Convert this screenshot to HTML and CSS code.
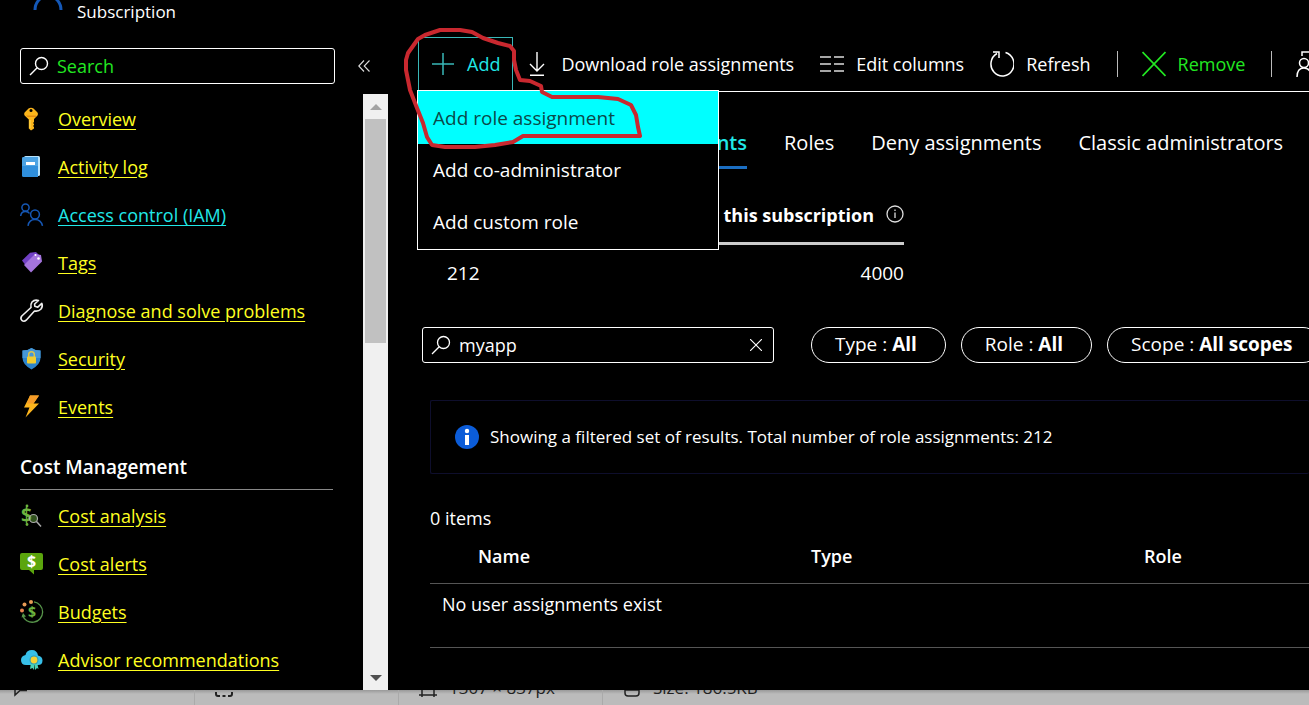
FILE: index.html
```
<!DOCTYPE html>
<html lang="en">
<head>
  <meta charset="UTF-8" />
  <title>Subscription - Access control (IAM)</title>
  <meta name="viewport" content="width=device-width, initial-scale=1" />
  <link rel="stylesheet" href="styles.css">
</head>
<body>

  <div class="portal">

    <!-- Sidebar -->
    <aside class="sidebar">
      <div class="resource-header">
        <svg class="resource-icon" width="30" height="12" viewBox="0 0 30 12" fill="none" stroke="#1458b8" stroke-width="3"><path d="M2 10A13 14 0 0 1 28 10"/></svg>
        <span>Subscription</span>
      </div>

      <div class="side-search-row">
        <div class="search-box">
          <svg width="20" height="20" viewBox="0 0 20 20" fill="none" stroke="#fff" stroke-width="1.4"><circle cx="12.5" cy="7.5" r="6"/><path d="M8.2 11.8L1 19"/></svg>
          <input type="text" class="side-input" placeholder="Search" aria-label="Search menu" />
        </div>
        <button class="collapse-btn" aria-label="Collapse menu">
          <svg width="12" height="12" viewBox="0 0 12 12" fill="none" stroke="#ddd" stroke-width="1.1"><path d="M6 .5L.8 6L6 11.500M11.500 .5L6.200 6L11.500 11.500"/></svg>
        </button>
      </div>

      <div class="side-body">
        <nav class="side-nav">
          <a href="#overview">
            <svg width="24" height="24" viewBox="0 0 24 24"><path d="M8.500 1.500Q11 0 13.500 1.500L17.500 5.500Q18.500 7 17.500 8.500L14 12V15L13 16L14 17V18L13 19L14 20V21.500L11 23.500L8.800 21.500V12.500L4.600 8.500Q3.600 7 4.600 5.500Z" fill="#fbb51b"/><path d="M6 8.500H16V10H7.500Z" fill="#e38b10"/><circle cx="11" cy="3.500" r="1.500" fill="#000"/><path d="M10 13V21" stroke="#ffdc55"/></svg>
            <span>Overview</span>
          </a>
          <a href="#activity">
            <svg width="24" height="24" viewBox="0 0 24 24"><rect x="4" y="1" width="16" height="20" rx="1.500" fill="#b9e3fb"/><path d="M2 3.500Q2 2 3.500 2H18V22H3.500Q2 22 2 20.500Z" fill="#2f8fdc"/><path d="M2 3.500Q2 2 3.500 2H18V11H2Z" fill="#4ba3e4"/><rect x="6" y="7" width="9" height="3" fill="#fff"/></svg>
            <span>Activity log</span>
          </a>
          <a href="#iam" class="active">
            <svg width="24" height="24" viewBox="0 0 24 24" fill="none" stroke="#1557b5" stroke-width="1.5"><circle cx="5.500" cy="4.500" r="3.600"/><path d="M.7 13Q1 8.500 5.500 8.500Q8.500 8.500 9.500 10.500"/><circle cx="15" cy="11.500" r="4.400"/><path d="M8 22.800Q9 16.500 15 16.500T22.500 22.800"/></svg>
            <span>Access control (IAM)</span>
          </a>
          <a href="#tags">
            <svg width="24" height="24" viewBox="0 0 24 24"><path d="M2 9.500L10 1.800L16 1L19 4L7 16Z" fill="#7140c4"/><path d="M4 14L15 3L21 4L22 10.500L11 21.500Z" fill="#a474dd"/><circle cx="15.500" cy="4" r="1" fill="#fff"/><circle cx="18.500" cy="7.500" r="1.300" fill="#fff"/></svg>
            <span>Tags</span>
          </a>
          <a href="#diagnose">
            <svg width="24" height="24" viewBox="0 0 24 24" fill="none" stroke="#eee" stroke-width="1.600" stroke-linejoin="round"><path d="M18.500 1.500Q14.500 .3 12 3Q10.500 5 11 8.500L1.800 17Q0 19.200 1.800 21.300Q4 23.200 6.200 21.200L14.500 12Q18.500 12.700 20.800 10.300Q23.200 7.600 21.800 4.400L17.800 8.200L14.800 7.200L14.600 5Z"/></svg>
            <span>Diagnose and solve problems</span>
          </a>
          <a href="#security">
            <svg width="24" height="24" viewBox="0 0 24 24"><path d="M11.500 1Q15 3.500 20.500 3.500V11Q20.500 17.500 11.500 22.500Q2.500 17.500 2.500 11V3.500Q8 3.500 11.500 1Z" fill="#2c83cb"/><path d="M11.500 1Q15 3.500 20.500 3.500V11H2.500V3.500Q8 3.500 11.500 1Z" fill="#4597d7"/><path d="M8.700 10V7.500A2.800 2.800 0 0 1 14.300 7.500V10" fill="none" stroke="#d9c34c" stroke-width="1.500"/><rect x="7" y="9.500" width="9" height="7" rx="1" fill="#f1ce31"/></svg>
            <span>Security</span>
          </a>
          <a href="#events">
            <svg width="24" height="24" viewBox="0 0 24 24"><path d="M10 .5H19L13.500 8.500H19L5.500 22.500L9.500 12.500H4Z" fill="#fcb51d"/><path d="M10 .5H19L13.500 8.500H7Z" fill="#f59b28"/></svg>
            <span>Events</span>
          </a>

          <h2>Cost Management</h2>

          <a href="#cost-analysis">
            <svg width="24" height="24" viewBox="0 0 24 24"><text x="1" y="18" class="dollar" font-size="19" fill="#6cb33f">$</text><circle cx="7" cy="2" r="1.400" fill="#6cb33f"/><circle cx="7" cy="20.500" r="1.400" fill="#6cb33f"/><circle cx="13.500" cy="14.500" r="4" fill="#64a63d" fill-opacity=".5" stroke="#aaa" stroke-width="1.200"/><path d="M16.500 17.500L21 22.500" stroke="#aaa" stroke-width="1.500"/></svg>
            <span>Cost analysis</span>
          </a>
          <a href="#cost-alerts">
            <svg width="24" height="24" viewBox="0 0 24 24"><path d="M2 1H21Q23 1 23 3V16Q23 18 21 18H14V22.500L9 18H2Q0 18 0 16V3Q0 1 2 1Z" fill="#5ba50d"/><text x="7" y="15" class="dollar" font-size="16" fill="#fff">$</text></svg>
            <span>Cost alerts</span>
          </a>
          <a href="#budgets">
            <svg width="24" height="24" viewBox="0 0 24 24"><path d="M14 1.800A10.300 10.300 0 1 1 2.500 15" fill="none" stroke="#57954a" stroke-width="1.300"/><path d="M1.500 17.500L3 13L6 16.500Z" fill="#57954a"/><circle cx="11" cy="2" r="2" fill="#e79b55"/><circle cx="4.500" cy="4.500" r="2" fill="#e79b55"/><circle cx="2" cy="10.500" r="2" fill="#ea8450"/><text x="8" y="17" class="dollar" font-size="14" fill="#6cb33f">$</text></svg>
            <span>Budgets</span>
          </a>
          <a href="#advisor">
            <svg width="24" height="24" viewBox="0 0 24 24"><path d="M6 17Q1 17 1 12Q1 8 5.500 7Q6.500 2 12 2Q17 2 18 7.500Q22.500 8.500 22.500 12.500Q22.500 17 18 17Z" fill="#37bfe8"/><path d="M11 14L10 21L12.500 20L14 22V15L15 22L17 20L18.500 21L17 14Z" fill="#49d2b7"/><circle cx="14" cy="12" r="4.500" fill="#2d9bb6"/><circle cx="14" cy="12" r="3.400" fill="#f5d132"/></svg>
            <span>Advisor recommendations</span>
          </a>
        </nav>

        <div class="scrollbar">
          <div class="arrow"><svg width="12" height="6" viewBox="0 0 12 6"><path d="M0 6L6 0L12 6Z" fill="#a3a3a3"/></svg></div>
          <div class="thumb"></div>
          <div class="arrow"><svg width="12" height="6" viewBox="0 0 12 6"><path d="M0 0H12L6 6Z" fill="#505050"/></svg></div>
        </div>
      </div>
    </aside>

    <!-- Access control blade -->
    <main class="blade">
      <div class="toolbar">
        <div class="add-wrap">
          <button class="tool add">
            <svg width="24" height="24" viewBox="0 0 24 24" stroke="#39b8b8" stroke-width="1.500"><path d="M12 1V23M1 12H23"/></svg>
            Add
          </button>
          <div class="add-menu">
            <button class="selected">Add role assignment</button>
            <button>Add co-administrator</button>
            <button>Add custom role</button>
          </div>
          <svg class="marker" width="240" height="124" viewBox="403 26 240 124" fill="none" stroke="#c9282f" stroke-width="4" stroke-linejoin="round"><path d="M425 35L440 30H460L472 32L483 38L498 43L510 46L514 51L514 60L516 70L520 80L530 81L541 86L542 92L552 97H598L618 99L631 105L636 115L638 127L640 136H523L513 142L495 145L475 147H445L432 145L427 137L423 123L417 108L410 90L406 70V60L408 53L418 39Z"/></svg>
        </div>
        <button class="tool">
          <svg width="24" height="24" viewBox="0 0 24 24" fill="none" stroke="#fff" stroke-width="1.400"><path d="M12 0V19M5 12L12 19L19 12M5 23.300H19"/></svg>
          Download role assignments
        </button>
        <button class="tool">
          <svg width="24" height="24" viewBox="0 0 24 24" stroke="#ddd" stroke-width="1.500"><path d="M0 5H11M14 5H24M0 12H11M14 12H24M0 19H11M14 19H24"/></svg>
          Edit columns
        </button>
        <button class="tool">
          <svg width="24" height="26" viewBox="0 0 24 26" fill="none" stroke="#fff" stroke-width="1.500"><path d="M15.500 1.500A11.500 12 0 1 1 7 2.500M3 1H9V7"/></svg>
          Refresh
        </button>
        <span class="divider"></span>
        <button class="tool remove">
          <svg width="24" height="26" viewBox="0 0 24 26" stroke="#22e822" stroke-width="1.800"><path d="M.5 1L23.500 25M23.500 1L.5 25"/></svg>
          Remove
        </button>
        <span class="divider"></span>
        <button class="tool" aria-label="Feedback">
          <svg width="24" height="26" viewBox="0 0 24 26" fill="none" stroke="#fff" stroke-width="1.500"><circle cx="8" cy="12" r="4.500"/><path d="M1 26Q1 17 8 17T15 26M6 5V1H23V12H15"/></svg>
        </button>
      </div>

      <div class="tabs">
        <div class="first-tab"><a href="#role-assignments" class="current">Role assignments</a></div>
        <a href="#roles">Roles</a>
        <a href="#deny">Deny assignments</a>
        <a href="#classic">Classic administrators</a>
      </div>

      <section class="summary">
        <h3>
          Number of role assignments for this subscription
          <svg width="18" height="18" viewBox="0 0 18 18" fill="none" stroke="#ddd" stroke-width="1.300"><circle cx="9" cy="9" r="8"/><path d="M9 7.500V13M9 4.500V6"/></svg>
        </h3>
        <div class="counts"><span>212</span><span>4000</span></div>
      </section>

      <div class="filters">
        <div class="search-box filter-box">
          <svg width="20" height="20" viewBox="0 0 20 20" fill="none" stroke="#fff" stroke-width="1.300"><circle cx="12.500" cy="7.500" r="6"/><path d="M8.200 11.800L1 19"/></svg>
          <input type="text" value="myapp" aria-label="Search by name or email" />
          <button class="clear-btn" aria-label="Clear">
            <svg width="12" height="12" viewBox="0 0 12 12" stroke="#fff" stroke-width="1.100"><path d="M0 0L12 12M12 0L0 12"/></svg>
          </button>
        </div>
        <button class="pill">Type : <b>All</b></button>
        <button class="pill">Role : <b>All</b></button>
        <button class="pill">Scope : <b>All scopes</b></button>
      </div>

      <div class="notice">
        <svg width="24" height="24" viewBox="0 0 24 24"><circle cx="12" cy="12" r="12" fill="#0b5cd8"/><circle cx="12" cy="6" r="2.200" fill="#fff"/><rect x="10" y="10" width="4" height="10" fill="#fff"/></svg>
        <span>Showing a filtered set of results. Total number of role assignments: 212</span>
      </div>

      <div class="results">
        <p>0 items</p>
        <table>
          <thead>
            <tr>
              <th class="col">Name</th>
              <th class="col">Type</th>
              <th>Role</th>
            </tr>
          </thead>
          <tbody>
            <tr>
              <td colspan="3">No user assignments exist</td>
            </tr>
          </tbody>
        </table>
      </div>
    </main>
  </div>

  <!-- Image viewer status bar -->
  <footer class="statusbar">
    <div class="cell"><svg width="14" height="18" viewBox="0 0 14 18" fill="none" stroke="#222" stroke-width="1.500"><path d="M1 1V16L6 11.500H13"/></svg></div>
    <div class="cell"><svg width="18" height="18" viewBox="0 0 18 18" fill="none" stroke="#222" stroke-width="2"><path d="M1 13V15Q1 17 3 17H5M7.500 17H10.500M13 17H15Q17 17 17 15V13"/></svg></div>
    <div class="cell"><svg width="18" height="18" viewBox="0 0 18 18" fill="none" stroke="#222" stroke-width="1.500"><path d="M3 0V18M15 0V18M0 16H18"/></svg>1307 × 837px</div>
    <div class="cell"><svg width="18" height="18" viewBox="0 0 18 18" fill="none" stroke="#222" stroke-width="1.500"><path d="M2 1V14Q2 17 5 17H13Q16 17 16 14V1M2 11H16"/></svg>Size: 186.5KB</div>
  </footer>

</body>
</html>
```
FILE: styles.css
```
* {
  box-sizing: border-box;
}
body {
  margin: 0;
  height: 100vh;
  display: flex;
  flex-direction: column;
  overflow: hidden;
  background: #000;
  color: #fff;
  font-family: 'Segoe UI', 'Open Sans', 'Noto Sans', sans-serif;
  font-size: 18px;
  line-height: 26px;
}
button, input {
  font: inherit;
  color: inherit;
  background: none;
  border: none;
  padding: 0;
}
button {
  cursor: pointer;
  white-space: nowrap;
}
svg {
  flex: none;
}
.portal {
  flex: 1;
  min-height: 0;
  display: flex;
}

/* Sidebar */
.sidebar {
  width: 388px;
  flex: none;
  display: flex;
  flex-direction: column;
}
.resource-header {
  height: 48px;
  padding-left: 33px;
  display: flex;
  align-items: flex-start;
  gap: 14px;
  font-size: 17px;
  line-height: 24px;
}
.side-search-row {
  display: flex;
  align-items: center;
  padding: 0 18px 10px 20px;
}
.search-box {
  flex: 1;
  min-width: 0;
  height: 36px;
  padding: 0 8px;
  display: flex;
  align-items: center;
  gap: 8px;
  border: 1px solid #fff;
  border-radius: 3px;
}
.search-box input {
  flex: 1;
  min-width: 0;
  outline: none;
}
.side-input::placeholder {
  color: #22e822;
  opacity: 1;
}
.collapse-btn {
  width: 12px;
  margin-left: 23px;
  display: flex;
}
.side-body {
  flex: 1;
  min-height: 0;
  display: flex;
}
.side-nav {
  flex: 1;
  padding: 1px 30px 0 20px;
  overflow: hidden;
}
.side-nav a {
  height: 48px;
  display: flex;
  align-items: center;
  gap: 14px;
  color: #ffff20;
  text-underline-offset: 3px;
  white-space: nowrap;
}
.side-nav a svg {
  overflow: visible;
}
.side-nav a.active {
  color: #20e8e8;
}
.side-nav h2 {
  margin: 0 0 2px;
  height: 59px;
  padding-top: 23px;
  border-bottom: 1px solid #888;
  font-size: 19px;
  font-weight: 600;
}
.dollar {
  font-family: 'Open Sans', sans-serif;
  font-weight: 700;
}
.scrollbar {
  width: 25px;
  display: flex;
  flex-direction: column;
  background: #f0f0f0;
}
.arrow {
  height: 25px;
  display: flex;
  align-items: center;
  justify-content: center;
}
.thumb {
  height: 224px;
  margin: 0 2px auto;
  background: #c1c1c1;
}

/* Toolbar */
.blade {
  flex: 1;
  min-width: 0;
  padding: 37px 0 0 30px;
  overflow: hidden;
}
.toolbar {
  height: 55px;
  display: flex;
  border-bottom: 1px solid #fff;
}
.tool {
  flex: none;
  height: 54px;
  padding: 0 14px 0 12px;
  display: flex;
  align-items: center;
  gap: 12px;
}
.add-wrap {
  position: relative;
  flex: none;
}
.add {
  padding: 0 12px;
  border: 1px solid #39b8b8;
  color: #20e8e8;
}
.remove {
  color: #22e822;
}
.divider {
  flex: none;
  width: 1px;
  height: 26px;
  margin: 14px 12px;
  background: #bbb;
}
.add-menu {
  position: absolute;
  top: 53px;
  left: -1px;
  z-index: 1;
  width: 302px;
  padding-bottom: 1px;
  display: flex;
  flex-direction: column;
  background: #000;
  border: 1px solid #fff;
  font-size: 19px;
}
.add-menu button {
  height: 52px;
  padding-left: 15px;
  text-align: left;
}
.add-menu .selected {
  height: 53px;
  background: #00ffff;
  color: #0b4a4a;
}
.marker {
  position: absolute;
  top: -11px;
  left: -15px;
  z-index: 2;
  pointer-events: none;
}

/* Tabs and summary */
.tabs {
  display: flex;
  gap: 37px;
  margin-top: 38px;
  font-size: 20px;
}
.tabs a {
  display: block;
  height: 39px;
  color: #fff;
  text-decoration: none;
  white-space: nowrap;
}
.first-tab {
  width: 329px;
  flex: none;
  display: flex;
  justify-content: flex-end;
}
.tabs .current {
  color: #20e8e8;
  font-weight: 600;
  border-bottom: 3px solid #1b6ec2;
}
.summary {
  width: 474px;
  margin: 33px 0 0 12px;
}
.summary h3 {
  margin: 0;
  height: 43px;
  display: flex;
  align-items: flex-start;
  justify-content: flex-end;
  gap: 12px;
  border-bottom: 3px solid #ccc;
  font-size: 18px;
  font-weight: 700;
  white-space: nowrap;
}
.summary h3 svg {
  margin-top: 3px;
}
.counts {
  display: flex;
  justify-content: space-between;
  padding: 15px 0 0 17px;
  font-size: 19px;
}

/* Filters */
.filters {
  display: flex;
  gap: 15px;
  margin: 41px 0 0 4px;
}
.filter-box {
  flex: none;
  width: 352px;
  margin-right: 22px;
}
.clear-btn {
  display: flex;
  margin-right: 3px;
}
.pill {
  flex: none;
  height: 36px;
  padding: 0 28px 2px 23px;
  border: 1px solid #fff;
  border-radius: 18px;
  font-size: 19px;
}
.notice {
  display: flex;
  align-items: center;
  gap: 11px;
  height: 74px;
  margin: 37px 0 0 12px;
  padding-left: 24px;
  border: 1px solid #0e0e2c;
  border-right: none;
  border-radius: 2px;
  font-size: 17px;
  white-space: nowrap;
}

/* Results */
.results {
  margin: 31px 0 0 12px;
}
.results p {
  margin: 0;
}
.results table {
  width: 100%;
  table-layout: fixed;
  border-collapse: collapse;
}
.results th {
  height: 52px;
  padding: 12px 0 13px 48px;
  text-align: left;
  vertical-align: top;
  font-weight: 600;
  border-bottom: 1px solid #555;
}
.results .col {
  width: 333px;
}
.results td {
  height: 64px;
  padding: 7px 12px;
  vertical-align: top;
  border-bottom: 1px solid #555;
}

/* Status bar */
.statusbar {
  height: 15px;
  flex: none;
  display: flex;
  overflow: hidden;
  background: linear-gradient(#999, #bbb 4px);
  color: #222;
  font-size: 17px;
}
.cell {
  width: 204px;
  height: 15px;
  padding: 0 0 8px 20px;
  display: flex;
  align-items: flex-end;
  gap: 12px;
  border-right: 1px solid #aaa;
  line-height: 18px;
}
.cell:first-child {
  width: 195px;
  padding-left: 14px;
}
.cell:last-child {
  border-right: none;
}
```
